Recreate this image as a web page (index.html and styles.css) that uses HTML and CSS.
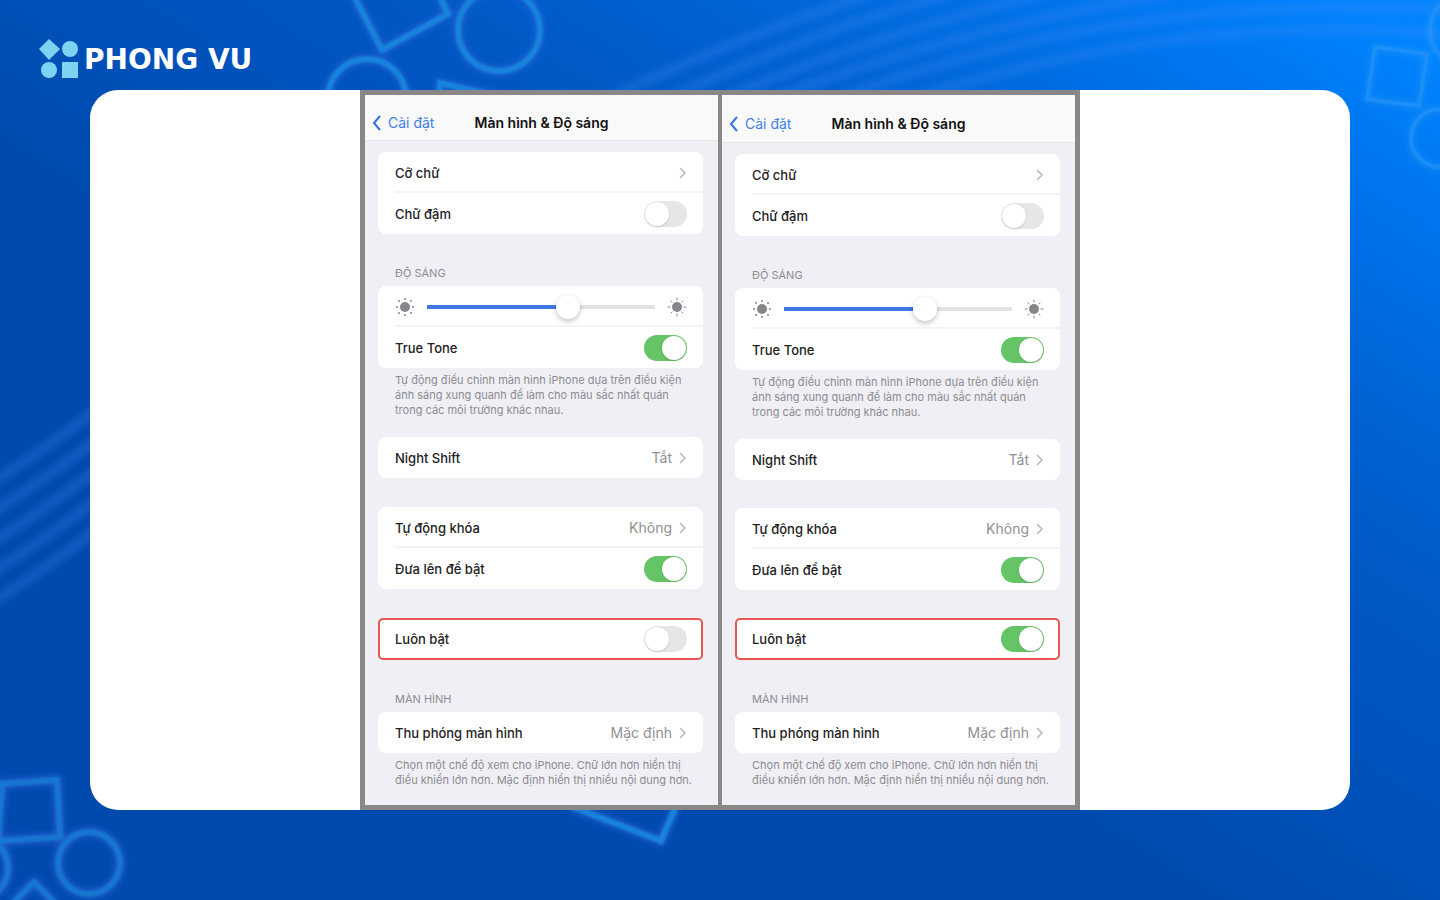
FILE: index.html
```
<!DOCTYPE html>
<html lang="vi">
<head>
  <meta charset="UTF-8" />
  <meta name="viewport" content="width=device-width, initial-scale=1" />
  <title>Phong Vu – Màn hình & Độ sáng</title>
  <link rel="stylesheet" href="styles.css">
</head>
<body>

  <!-- === Background shapes === -->
  <svg class="backdrop" viewBox="0 0 1440 900" preserveAspectRatio="xMidYMid slice" aria-hidden="true">
    <defs>
      <filter id="glow" x="-20%" y="-20%" width="140%" height="140%"><feGaussianBlur stdDeviation="3" /></filter>
      <filter id="soft"><feGaussianBlur stdDeviation="1" /></filter>
      <filter id="wave-blur"><feGaussianBlur stdDeviation="3" /></filter>
      <g id="shapes">
        <path d="M354 -4 L382 50 L448 14 L438 -8" />
        <circle cx="499" cy="30" r="41" />
        <circle cx="367" cy="98" r="39" />
        <path d="M439 104 L440 83 L510 99" />
        <path d="M570 806 L661 841 L676 806" />
      </g>
      <g id="shapes-corner">
        <path d="M-20 785 L57 780 L60 837 L-2 841 L2 784" />
        <circle cx="89" cy="863" r="31" />
        <circle cx="-24" cy="868" r="32" />
        <path d="M12 904 L34 882 L56 904" />
      </g>
      <g id="shapes-right">
        <path d="M1375 47 L1427 54 L1419 106 L1367 99 Z" />
        <circle cx="1467" cy="30" r="37" />
        <circle cx="1440" cy="138" r="29" />
      </g>
    </defs>
    <g class="waves" filter="url(#wave-blur)">
      <path d="M610 98 Q730 40 870 -6" />
      <path d="M670 98 Q800 35 950 -6" />
      <path d="M725 98 Q870 35 1045 -6" />
      <path d="M775 98 Q950 30 1170 -6" />
      <path d="M840 98 Q1120 -8 1450 10" />
      <path d="M915 98 Q1180 12 1450 34" />
      <path d="M-10 484 Q50 446 100 407" />
      <path d="M-10 514 Q50 476 100 437" />
      <path d="M-10 544 Q50 506 100 467" />
      <path d="M-10 574 Q50 536 100 497" />
      <path d="M-10 604 Q50 566 100 527" />
    </g>
    <use href="#shapes" class="halo" filter="url(#glow)" />
    <use href="#shapes" class="outline" filter="url(#soft)" />
    <use href="#shapes-corner" class="halo" filter="url(#glow)" />
    <use href="#shapes-corner" class="outline-corner" filter="url(#soft)" />
    <use href="#shapes-right" class="halo-right" filter="url(#glow)" />
    <use href="#shapes-right" class="outline-right" filter="url(#soft)" />
  </svg>

  <!-- === Logo === -->
  <header class="brand">
    <svg class="brand-mark" viewBox="0 0 40 40" aria-hidden="true">
      <path d="M10 0 L21 10 L10 21 L0 10 Z" />
      <circle cx="31" cy="10" r="8" />
      <circle cx="10" cy="31" r="8" />
      <rect x="23" y="23" width="16" height="16" />
    </svg>
    <span class="brand-name">PHONG VU</span>
  </header>

  <!-- === Board with the two screens === -->
  <main class="board">
    <div class="screens">

      <section class="screen">
        <div class="topbar">
          <a class="back" href="#"><svg class="back-icon" viewBox="0 0 10 18"><path d="M8 2 L2 9 L8 16" /></svg>Cài đặt</a>
          <h1 class="title">Màn hình &amp; Độ sáng</h1>
        </div>
        <div class="content">
          <div class="card">
            <a class="row" href="#"><span>Cỡ chữ</span><svg class="chevron" viewBox="0 0 8 12"><path d="M1 1 L6 6 L1 11" /></svg></a>
            <label class="row"><span>Chữ đậm</span><input class="switch" type="checkbox"></label>
          </div>
          <h2 class="label">ĐỘ SÁNG</h2>
          <div class="card">
            <div class="row">
              <svg class="sun" viewBox="0 0 20 20"><circle cx="10" cy="10" r="5" /><path class="dots" d="M10 2v0M10 18v0M2 10h0M18 10h0M4 4h0M16 4h0M4 16h0M16 16h0" /></svg>
              <input class="slider" type="range" min="0" max="100" value="63" aria-label="Độ sáng">
              <svg class="sun" viewBox="0 0 20 20"><circle cx="10" cy="10" r="5" /><path d="M10 1v2M10 17v2M1 10h2M17 10h2M4 4l1 1M15 5l1-1M4 16l1-1M15 15l1 1" /></svg>
            </div>
            <label class="row"><span>True Tone</span><input class="switch" type="checkbox" checked></label>
          </div>
          <p class="help">Tự động điều chỉnh màn hình iPhone dựa trên điều kiện<br>ánh sáng xung quanh để làm cho màu sắc nhất quán<br>trong các môi trường khác nhau.</p>
          <div class="card">
            <a class="row" href="#"><span>Night Shift</span><span class="value">Tắt</span><svg class="chevron" viewBox="0 0 8 12"><path d="M1 1 L6 6 L1 11" /></svg></a>
          </div>
          <div class="card spaced">
            <a class="row" href="#"><span>Tự động khóa</span><span class="value">Không</span><svg class="chevron" viewBox="0 0 8 12"><path d="M1 1 L6 6 L1 11" /></svg></a>
            <label class="row"><span>Đưa lên để bật</span><input class="switch" type="checkbox" checked></label>
          </div>
          <div class="card spaced marked">
            <label class="row"><span>Luôn bật</span><input class="switch" type="checkbox"></label>
          </div>
          <h2 class="label">MÀN HÌNH</h2>
          <div class="card">
            <a class="row" href="#"><span>Thu phóng màn hình</span><span class="value">Mặc định</span><svg class="chevron" viewBox="0 0 8 12"><path d="M1 1 L6 6 L1 11" /></svg></a>
          </div>
          <p class="help">Chọn một chế độ xem cho iPhone. Chữ lớn hơn hiển thị<br>điều khiển lớn hơn. Mặc định hiển thị nhiều nội dung hơn.</p>
        </div>
      </section>

      <section class="screen screen-on">
        <div class="topbar">
          <a class="back" href="#"><svg class="back-icon" viewBox="0 0 10 18"><path d="M8 2 L2 9 L8 16" /></svg>Cài đặt</a>
          <h1 class="title">Màn hình &amp; Độ sáng</h1>
        </div>
        <div class="content">
          <div class="card">
            <a class="row" href="#"><span>Cỡ chữ</span><svg class="chevron" viewBox="0 0 8 12"><path d="M1 1 L6 6 L1 11" /></svg></a>
            <label class="row"><span>Chữ đậm</span><input class="switch" type="checkbox"></label>
          </div>
          <h2 class="label">ĐỘ SÁNG</h2>
          <div class="card">
            <div class="row">
              <svg class="sun" viewBox="0 0 20 20"><circle cx="10" cy="10" r="5" /><path class="dots" d="M10 2v0M10 18v0M2 10h0M18 10h0M4 4h0M16 4h0M4 16h0M16 16h0" /></svg>
              <input class="slider" type="range" min="0" max="100" value="63" aria-label="Độ sáng">
              <svg class="sun" viewBox="0 0 20 20"><circle cx="10" cy="10" r="5" /><path d="M10 1v2M10 17v2M1 10h2M17 10h2M4 4l1 1M15 5l1-1M4 16l1-1M15 15l1 1" /></svg>
            </div>
            <label class="row"><span>True Tone</span><input class="switch" type="checkbox" checked></label>
          </div>
          <p class="help">Tự động điều chỉnh màn hình iPhone dựa trên điều kiện<br>ánh sáng xung quanh để làm cho màu sắc nhất quán<br>trong các môi trường khác nhau.</p>
          <div class="card">
            <a class="row" href="#"><span>Night Shift</span><span class="value">Tắt</span><svg class="chevron" viewBox="0 0 8 12"><path d="M1 1 L6 6 L1 11" /></svg></a>
          </div>
          <div class="card spaced">
            <a class="row" href="#"><span>Tự động khóa</span><span class="value">Không</span><svg class="chevron" viewBox="0 0 8 12"><path d="M1 1 L6 6 L1 11" /></svg></a>
            <label class="row"><span>Đưa lên để bật</span><input class="switch" type="checkbox" checked></label>
          </div>
          <div class="card spaced marked">
            <label class="row"><span>Luôn bật</span><input class="switch" type="checkbox" checked></label>
          </div>
          <h2 class="label">MÀN HÌNH</h2>
          <div class="card">
            <a class="row" href="#"><span>Thu phóng màn hình</span><span class="value">Mặc định</span><svg class="chevron" viewBox="0 0 8 12"><path d="M1 1 L6 6 L1 11" /></svg></a>
          </div>
          <p class="help">Chọn một chế độ xem cho iPhone. Chữ lớn hơn hiển thị<br>điều khiển lớn hơn. Mặc định hiển thị nhiều nội dung hơn.</p>
        </div>
      </section>

    </div>
  </main>

</body>
</html>
```

FILE: styles.css
```
* {
  box-sizing: border-box;
}

body {
  margin: 0;
  min-height: 100vh;
  padding: 0 90px 90px;
  background: linear-gradient(to top right, #004aad 0%, #004aad 42%, #0051b9 52%, #0057c2 63%, #0063d4 75%, #0074ec 87%, #0084ff 97%);
  color: #222;
  font-family: Inter, sans-serif;
  font-size: 14px;
}

a {
  color: inherit;
  text-decoration: none;
}

/* === Background === */
.backdrop {
  position: absolute;
  top: 0;
  left: 0;
  z-index: -1;
  width: 100%;
  height: 100%;
  fill: none;
}

.waves {
  stroke: #4a8cf5;
  stroke-width: 11;
  opacity: 0.24;
}

.halo {
  stroke: #2b62d8;
  stroke-width: 9;
  opacity: 0.8;
}

.outline {
  stroke: #1583dc;
  stroke-width: 6;
}

.outline-corner {
  stroke: #1576d0;
  stroke-width: 6;
}

.halo-right {
  stroke: #2a98fb;
  stroke-width: 6;
  opacity: 0.5;
}

.outline-right {
  stroke: #2795f6;
  stroke-width: 3;
  opacity: 0.8;
}

/* === Logo === */
.brand {
  display: flex;
  align-items: center;
  gap: 5px;
  height: 90px;
  margin-left: -51px;
  padding-top: 28px;
}

.brand-mark {
  width: 40px;
  height: 40px;
  fill: #7dd3f0;
}

.brand-name {
  color: #fff;
  font-family: "DejaVu Sans", sans-serif;
  font-size: 28px;
  font-weight: 700;
}

/* === Board === */
.board {
  display: flex;
  justify-content: center;
  background: #fff;
  border-radius: 28px;
}

.screens {
  display: grid;
  grid-template-columns: 1fr 1fr;
  gap: 4px;
  width: 100%;
  max-width: 720px;
  padding: 5px;
  background: #8b8787;
}

.screen {
  --bar: 46px;
  --gap: 29px;
  background: #f0eff5;
}

.screen-on {
  --bar: 48px;
  --gap: 28px;
}

.topbar {
  display: grid;
  grid-template-columns: 1fr auto 1fr;
  align-items: center;
  height: var(--bar);
  padding: 10px 7px 0;
  background: #f9f9fa;
  border-bottom: 1px solid #e6e6ea;
}

.back {
  display: flex;
  align-items: center;
  gap: 6px;
  color: #3f7fe8;
}

.back-icon {
  width: 10px;
  height: 18px;
  fill: none;
  stroke: #3572e0;
  stroke-width: 2;
}

.title {
  margin: 0;
  color: #111;
  font-size: 14px;
  font-weight: 600;
}

.content {
  padding: 11px 15px 17px 13px;
}

/* === Cards === */
.card {
  background: #fff;
  border-radius: 8px;
}

.spaced {
  margin-top: var(--gap);
}

.marked {
  border: 2px solid #e8574d;
  border-radius: 5px;
}

.row {
  display: flex;
  align-items: center;
  gap: 7px;
  height: 41px;
  margin-left: 17px;
  padding-right: 16px;
  font-size: 13px;
  font-weight: 500;
}

.row + .row {
  box-shadow: 0 -2px 0 #f3f3f5;
}

.marked .row {
  height: 38px;
  margin-left: 15px;
  padding-right: 14px;
}

.row span:first-child {
  flex: 1;
}

.value {
  color: #909094;
  font-size: 14px;
  font-weight: 400;
}

.chevron {
  width: 8px;
  height: 12px;
  fill: none;
  stroke: #b8b8bc;
  stroke-width: 1.5;
}

.label {
  height: 52px;
  margin: 0;
  padding: 32px 17px 0;
  color: #8c8c92;
  font-size: 11px;
  font-weight: 400;
  line-height: 15px;
}

.help {
  margin: 0;
  padding: 5px 0 0 17px;
  color: #8c8c92;
  font-size: 11px;
  line-height: 15px;
  white-space: nowrap;
}

.help + .card {
  margin-top: 19px;
}

/* === Controls === */
.switch {
  appearance: none;
  width: 43px;
  height: 26px;
  margin: 0;
  padding: 1px;
  background: #e6e6e8;
  border-radius: 13px;
}

.switch::before {
  content: "";
  display: block;
  width: 24px;
  height: 24px;
  background: #fff;
  border-radius: 50%;
  box-shadow: 0 1px 2px rgba(0, 0, 0, 0.15);
}

.switch:checked {
  background: #65c466;
}

.switch:checked::before {
  margin-left: auto;
}

.sun {
  width: 20px;
  height: 20px;
  fill: #85858a;
  stroke: #85858a;
  stroke-width: 1;
  stroke-linecap: round;
}

.sun circle {
  stroke: none;
}

.dots {
  stroke-width: 2;
}

.slider {
  appearance: none;
  flex: 1;
  min-width: 0;
  height: 24px;
  margin: 0 5px;
  background: linear-gradient(to right, #3d78e3 63%, #e2e2e4 63%) center / 100% 4px no-repeat;
}

.slider::-webkit-slider-thumb {
  appearance: none;
  width: 24px;
  height: 24px;
  background: #fff;
  border-radius: 50%;
  box-shadow: 0 2px 5px rgba(0, 0, 0, 0.25);
}
```
